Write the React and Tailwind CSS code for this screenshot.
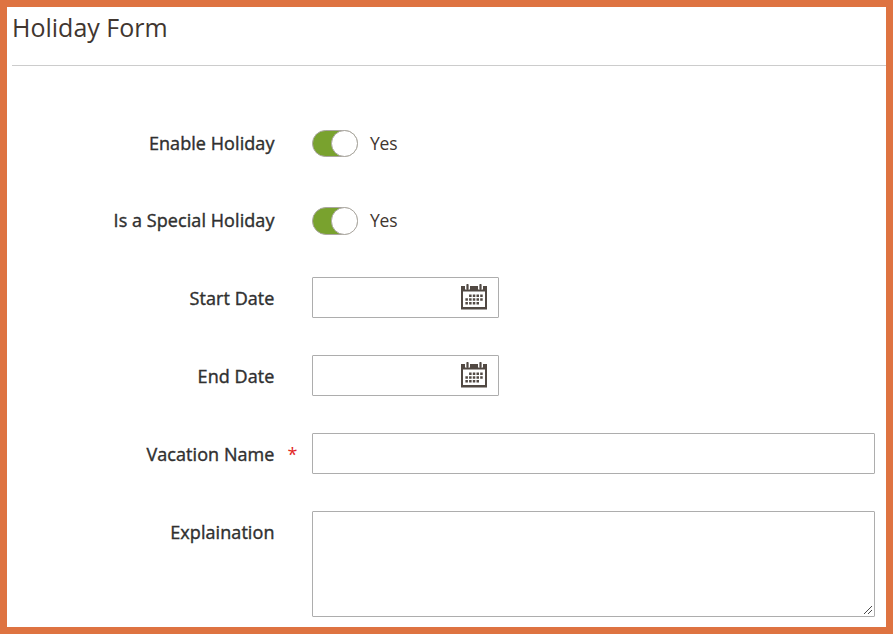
import React, { useState } from 'react';

function CalendarIcon() {
  return (
    <svg width="26" height="26" viewBox="0 0 26 26" fill="none" aria-hidden="true">
      <path fill="#514943" fillRule="evenodd" d="M0 2h26v23.5H0V2zm2 5.5V23h22V7.5H2z" />
      <path stroke="#fff" strokeWidth="5" d="M6.5 0v5.5M19.5 0v5.5" />
      <path stroke="#514943" strokeWidth="2.2" strokeLinecap="round" d="M6.5 1v4M19.5 1v4" />
      <path
        stroke="#514943"
        strokeWidth="2.6"
        strokeDasharray="2.5 1.2"
        d="M8.1 11.8h13.7M4.4 15.5h17.4M4.4 19.2h13.7"
      />
    </svg>
  );
}

function Field({ label, required, labelClass = 'pt-[7px]', children }) {
  return (
    <div className="flex items-start">
      <label
        className={`w-[262.5px] shrink-0 text-right text-[18px] leading-7 tracking-[0.07px] whitespace-nowrap text-[#303030] [-webkit-text-stroke:0.4px_#303030] ${labelClass}`}
      >
        {label}
      </label>
      <span className="w-[37.5px] shrink-0 pt-[7px] pl-[13px] text-[18px] leading-7 text-[#e22626]">
        {required && '*'}
      </span>
      {children}
    </div>
  );
}

function Toggle({ sizeClass = 'h-[27px]' }) {
  const [enabled, setEnabled] = useState(true);

  return (
    <div className="flex h-[41px] items-start gap-3 pt-[9px]">
      <button
        type="button"
        role="switch"
        aria-checked={enabled}
        onClick={() => setEnabled(!enabled)}
        className={`flex w-[46px] rounded-full border border-[#aaa6a0] ${sizeClass} ${
          enabled ? 'justify-end bg-[#79a22e]' : 'justify-start bg-[#e3e3e3]'
        }`}
      >
        <span
          className={`-my-px -mr-px w-[27px] rounded-full border border-[#aaa6a0] bg-white ${sizeClass}`}
        />
      </button>
      <span className="-mt-px text-[17.5px] leading-7 tracking-[-0.2px] text-[#41362f]">
        {enabled ? 'Yes' : 'No'}
      </span>
    </div>
  );
}

function DateInput() {
  const [value, setValue] = useState('');

  return (
    <div className="flex h-[41px] w-[187px] items-start rounded-[1px] border border-[#adadad] bg-white pt-1.5 pr-[11px]">
      <input
        type="text"
        value={value}
        onChange={(e) => setValue(e.target.value)}
        className="min-w-0 flex-1 px-3 text-[18px] outline-none"
      />
      <button type="button" aria-label="Select date" className="shrink-0">
        <CalendarIcon />
      </button>
    </div>
  );
}

function App() {
  return (
    <div className="h-[634px] w-[893px] overflow-hidden border-[7px] border-[#de7341] bg-white font-['Open_Sans',sans-serif]">
      <header className="ml-[5px] h-[59px] border-b border-[#cccccc]">
        <h1 className="pt-[2px] text-[25px] leading-9 text-[#41362f]">Holiday Form</h1>
      </header>

      <form className="flex flex-col gap-[37px] pt-[55px] pr-[11px] pl-[5px]">
        <Field label="Enable Holiday" labelClass="pt-[8px]">
          <Toggle />
        </Field>
        <div className="-mt-px pb-px">
          <Field label="Is a Special Holiday" labelClass="pt-[8px]">
            <Toggle sizeClass="h-[28px]" />
          </Field>
        </div>
        <Field label="Start Date">
          <DateInput />
        </Field>
        <Field label="End Date">
          <DateInput />
        </Field>
        <Field label="Vacation Name" required>
          <input
            type="text"
            className="h-[41px] min-w-0 flex-1 rounded-[1px] border border-[#adadad] px-3 text-[18px] outline-none"
          />
        </Field>
        <Field label="Explaination">
          <div className="relative flex min-w-0 flex-1">
            <textarea className="h-[106px] min-w-0 flex-1 resize-none rounded-[1px] border border-[#adadad] px-3 py-2 text-[18px] outline-none" />
            <svg
              className="pointer-events-none absolute right-[3px] bottom-[3px]"
              width="8"
              height="8"
              viewBox="0 0 8 8"
              stroke="#4a4a4a"
              aria-hidden="true"
            >
              <path d="M0 8l8-8M4 8l4-4" />
            </svg>
          </div>
        </Field>
      </form>
    </div>
  );
}

export default App;
